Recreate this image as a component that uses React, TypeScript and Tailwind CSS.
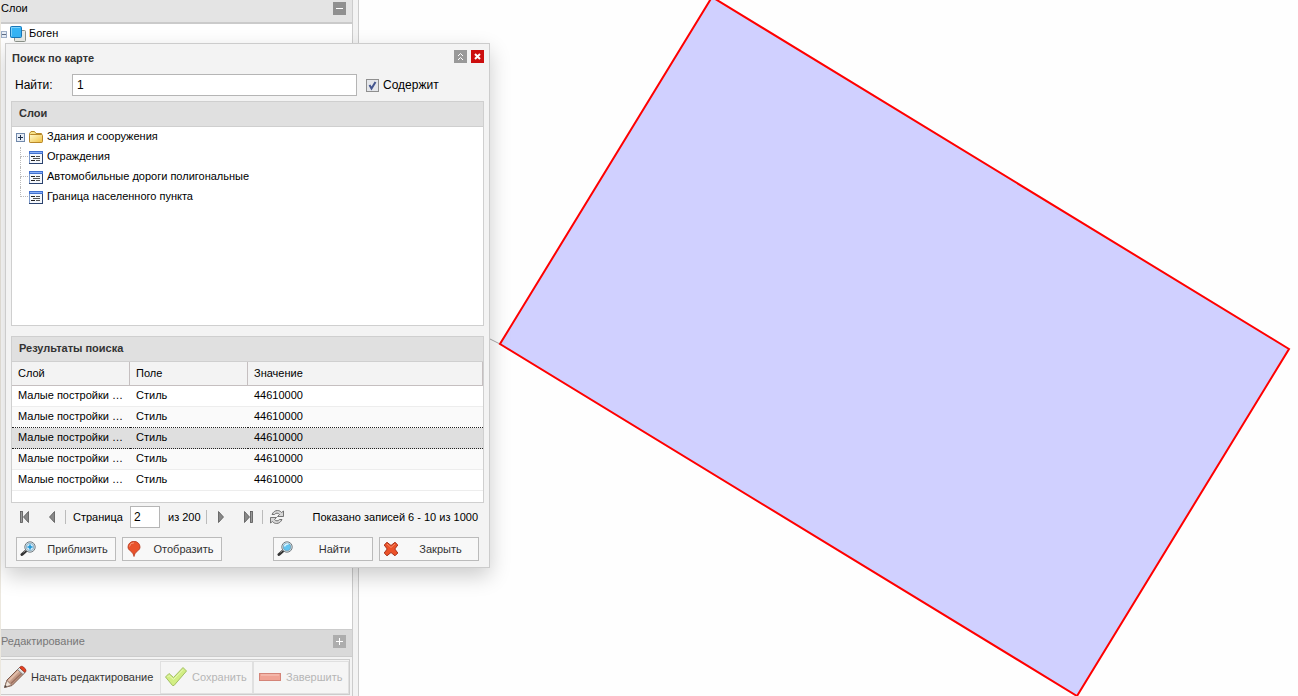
import React, {useState} from "react";
import clsx from "clsx";

interface ResultRow {
  id: number,
  layer: string,
  field: string,
  value: string,
}

interface PanelTitleProps {
  children: React.ReactNode,
}

interface DialogButtonProps {
  icon: React.ReactNode,
  label: string,
  onClick?: () => void,
}

interface ToolbarButtonProps {
  icon: React.ReactNode,
  label: string,
  disabled?: boolean,
  className?: string,
}

const layers: string[] = ["Ограждения", "Автомобильные дороги полигональные", "Граница населенного пункта"];

const results: ResultRow[] = [6, 7, 8, 9, 10].map((id) => ({
  id,
  layer: "Малые постройки …",
  field: "Стиль",
  value: "44610000",
}));

/* Icons */

function LayersIcon() {
  return (
    <svg width="16" height="16" viewBox="0 0 16 16">
      <rect x="4.500" y="4.500" width="11" height="11" rx="1" fill="#e9ebe6" stroke="#8d948c" />
      <rect x="0.500" y="0.500" width="11" height="11" rx="1" fill="#36b4f5" stroke="#1876b8" />
      <path d="M1.500 10V1.500H10" fill="none" stroke="#7fd2fb" />
    </svg>
  );
}

function FolderIcon() {
  return (
    <svg width="16" height="16" viewBox="0 0 16 16">
      <defs>
        <linearGradient id="folder" x1="0" y1="0" x2="1" y2="1">
          <stop offset="0" stopColor="#fffbd0" />
          <stop offset="1" stopColor="#f0c040" />
        </linearGradient>
      </defs>
      <path d="M1.500 13V4.500L3 2.500H6.500L8 4.500H13.500V13.500H2Z" fill="#f8e38a" stroke="#b58a2b" />
      <rect x="1.500" y="5.500" width="13" height="8" rx="1" fill="url(#folder)" stroke="#b8872a" />
    </svg>
  );
}

function LeafIcon() {
  return (
    <svg width="16" height="16" viewBox="0 0 16 16" shapeRendering="crispEdges">
      <rect x="1" y="2" width="14" height="13" fill="#7f9ccc" />
      <rect x="2" y="5" width="12" height="9" fill="#f4f7fc" />
      <rect x="1" y="2" width="14" height="3" fill="#3f6fd0" />
      <rect x="2" y="3" width="12" height="1" fill="#8ab0f5" />
      <path d="M1 14.500H15M14.500 5V15" stroke="#2b436e" fill="none" />
      <path d="M3 7.500H7M3 11.500H7" stroke="#222" fill="none" />
      <path d="M5 9.500H12M8 7.500H12M8 11.500H12" stroke="#555" fill="none" />
    </svg>
  );
}

function ExpanderIcon({expanded}: { expanded: boolean }) {
  return (
    <svg width="9" height="9" viewBox="0 0 9 9" shapeRendering="crispEdges">
      <rect x="0.500" y="0.500" width="8" height="8" fill="#e6edf7" stroke="#7189ab" />
      <path d={expanded ? "M2 4.500H7" : "M2 4.500H7M4.500 2V7"} stroke="#1c2d4a" />
    </svg>
  );
}

function MagnifierIcon({plus = false}: { plus?: boolean }) {
  return (
    <svg width="16" height="16" viewBox="0 0 16 16">
      <path d="M6.500 9.500L2 13.500" stroke="#333" strokeWidth="3" strokeLinecap="round" />
      <path d="M6 9L3.500 11.500" stroke="#888" />
      <circle cx="10" cy="6" r="5.200" fill="#f2f2f2" stroke="#6e7a80" />
      <circle cx="10" cy="6" r="3.800" fill={plus ? "#cfeafa" : "#62c4f0"} stroke="#6a98b0" strokeWidth="0.700" />
      {plus
        ? <path d="M7.500 6H12.500M10 3.500V8.500" stroke="#1793d6" strokeWidth="1.500" />
        : <path d="M7.500 5.500A3 3 0 0 1 11.500 3.300" stroke="#d9f3ff" strokeWidth="1.500" fill="none" />}
    </svg>
  );
}

function PinIcon() {
  return (
    <svg width="16" height="16" viewBox="0 0 16 16">
      <path
        d="M8 15.500C7.600 13.500 6.800 11.700 4.500 10C2.700 8.700 2 7.500 2 6A6 5.700 0 0 1 14 6C14 7.500 13.300 8.700 11.500 10C9.200 11.700 8.400 13.500 8 15.500Z"
        fill="#e9532c" stroke="#b5351a" strokeWidth="0.800"
      />
      <path d="M3.500 5.500A4.500 4 0 0 1 8 1.800" stroke="#f6987a" fill="none" />
    </svg>
  );
}

function CrossIcon() {
  return (
    <svg width="16" height="16" viewBox="0 0 16 16">
      <path
        d="M4 1.300L8 4.500L12 1.300L14.800 4L11.800 8L14.800 12L12 14.800L8 11.500L4 14.800L1.200 12L4.200 8L1.200 4Z"
        fill="#ec5229" stroke="#a8321a" strokeLinejoin="round"
      />
      <path d="M4 3L8 6.500L12 3" stroke="#f58a66" fill="none" />
    </svg>
  );
}

function RefreshIcon() {
  return (
    <svg width="16" height="16" viewBox="0 0 16 16">
      <path
        d="M3 5.500C4.200 3 6 1.500 8.500 1.500C10.200 1.500 11.500 2.200 12.500 3.500L14.500 2V7.500H8.500L10.500 5.500C9 3.700 7 3.700 5.500 5.500Z"
        fill="#d6d6d6" stroke="#666" strokeWidth="0.900" strokeLinejoin="round"
      />
      <path
        d="M13 10.500C11.800 13 10 14.500 7.500 14.500C5.800 14.500 4.500 13.800 3.500 12.500L1.500 14V8.500H7.500L5.500 10.500C7 12.300 9 12.300 10.500 10.500Z"
        fill="#d6d6d6" stroke="#666" strokeWidth="0.900" strokeLinejoin="round"
      />
    </svg>
  );
}

function ArrowIcon({back = false, bar = false}: { back?: boolean, bar?: boolean }) {
  return (
    <svg width="16" height="16" viewBox="0 0 16 16" className={clsx(back && "-scale-x-100")}>
      <path d="M4.500 2.500L9.500 8L4.500 13.500Z" fill="#888" stroke="#555" strokeWidth="0.800" />
      {bar && <rect x="10.500" y="2.500" width="2" height="11" fill="#999" stroke="#555" strokeWidth="0.800" />}
    </svg>
  );
}

function PencilIcon() {
  return (
    <svg width="24" height="24" viewBox="0 0 24 24">
      <path d="M1.500 22.500L4 15L15.500 3.500L21 8.500L9 20.500Z" fill="#c49a86" stroke="#7d5a4c" strokeLinejoin="round" />
      <path d="M5.500 16L16 5.500" stroke="#e0bba8" strokeWidth="2" />
      <path d="M8 18.500L19 8" stroke="#9b7060" strokeWidth="1.500" />
      <path d="M1.500 22.500L4 15.500L8.500 20Z" fill="#f0e2d6" stroke="#8d7468" strokeWidth="0.800" />
      <path d="M1.500 22.500L2.300 20L4 21.600Z" fill="#444" />
      <path d="M14.500 4.500L16.500 2.500L22 7.500L20 9.500Z" fill="#e3e3e3" stroke="#777" strokeWidth="0.800" />
      <path d="M16.500 2.500C18 1 19 1 20.500 2L22.300 4C23.300 5.300 23 6.300 22 7.500Z" fill="#e8401f" stroke="#8e2a1a" strokeWidth="0.800" />
    </svg>
  );
}

function CheckIcon() {
  return (
    <svg width="24" height="24" viewBox="0 0 24 24">
      <path
        d="M1.500 12L5 8.500L9.500 12.500L19 2.500L22.500 6L10 20.500H8.500Z"
        fill="#d2ee84" stroke="#a3c064" strokeLinejoin="round"
      />
      <path d="M3.500 12L5 10.500L9.500 14.500L19 4.500" stroke="#e8f8b8" fill="none" />
    </svg>
  );
}

function MinusIcon() {
  return (
    <svg width="24" height="24" viewBox="0 0 24 24">
      <rect x="1.500" y="8.500" width="21" height="7" fill="#f0a394" stroke="#d48478" />
      <path d="M3 10H21" stroke="#f7c8bc" />
    </svg>
  );
}

/* Shared parts */

function ToolButton({label, path, className}: { label: string, path: string, className?: string }) {
  return (
    <button
      type="button"
      aria-label={label}
      className={clsx("flex h-[13px] w-[13px] shrink-0 items-center justify-center text-white", className)}
    >
      <svg width="13" height="13" viewBox="0 0 13 13" fill="none" stroke="currentColor">
        <path d={path} />
      </svg>
    </button>
  );
}

function PanelTitle({children}: PanelTitleProps) {
  return (
    <h3 className="flex h-[25px] items-center border-b border-[#cfcfcf] bg-[#e0e0e0] px-[7px] pb-0.5 font-bold text-[#333]">
      {children}
    </h3>
  );
}

function DialogButton({icon, label, onClick}: DialogButtonProps) {
  return (
    <button
      type="button"
      onClick={onClick}
      className="flex h-6 w-[100px] items-center border border-[#bbb] bg-[#f8f8f8] pl-[3px] text-[#333]"
    >
      {icon}
      <span className="flex-1 pl-1 text-center">{label}</span>
    </button>
  );
}

function ToolbarButton({icon, label, disabled, className}: ToolbarButtonProps) {
  return (
    <button
      type="button"
      disabled={disabled}
      className={clsx(
        "flex h-[33px] items-center gap-1 whitespace-nowrap",
        disabled ? "border border-[#e0e0e0] bg-[#f5f5f5] text-[#b5b5b5]" : "text-[#333]",
        className
      )}
    >
      {icon}
      {label}
    </button>
  );
}

function SearchDialog() {
  const [query, setQuery] = useState<string>("1");
  const [contains, setContains] = useState<boolean>(true);
  const [page, setPage] = useState<string>("2");
  const [selectedId, setSelectedId] = useState<number>(8);

  return (
    <section
      aria-label="Поиск по карте"
      className="absolute top-[43px] left-[5px] w-[485px] border border-[#ccc] bg-[#f3f3f3] px-[5px] pb-1.5 shadow-[0_8px_20px_rgba(0,0,0,0.2)]"
    >
      <header className="flex h-7 items-center gap-1 pl-px">
        <h2 className="flex-1 font-bold text-[#333]">Поиск по карте</h2>
        <div className="flex gap-1 pb-1">
          <ToolButton label="Свернуть" path="M4 6L6.500 3.500L9 6M4 10L6.500 7.500L9 10" className="bg-[#999]" />
          <ToolButton label="Закрыть" path="M4 4L9 9M9 4L4 9" className="bg-[#cc0d0d] stroke-2" />
        </div>
      </header>

      <form className="flex h-[29px] items-center px-1 pb-[3px] text-xs" onSubmit={(e: React.FormEvent) => e.preventDefault()}>
        <label htmlFor="query" className="w-[57px]">Найти:</label>
        <input
          id="query"
          className="h-[22px] w-[285px] border border-[#b5b5b5] bg-white px-1"
          value={query}
          onChange={(e) => setQuery(e.target.value)}
        />
        <label className="ml-[9px] flex items-center gap-1">
          <span className="grid h-[13px] w-[13px]">
            <input
              type="checkbox"
              className="col-start-1 row-start-1 appearance-none border border-[#8f8f8f] bg-[#e4e6ea]"
              checked={contains}
              onChange={(e) => setContains(e.target.checked)}
            />
            {contains && (
              <svg width="13" height="13" viewBox="0 0 13 13" className="pointer-events-none col-start-1 row-start-1">
                <path d="M3.500 6L5.500 9.500L9.500 3" fill="none" stroke="#43558f" strokeWidth="2" />
              </svg>
            )}
          </span>
          Содержит
        </label>
      </form>

      <div className="h-[225px] border border-[#cfcfcf] bg-white">
        <PanelTitle>Слои</PanelTitle>
        <ul>
          <li className="flex h-5 items-center">
            <button type="button" aria-label="Развернуть" className="ml-1 pr-[3px]">
              <ExpanderIcon expanded={false} />
            </button>
            <FolderIcon />
            <span className="pb-0.5 pl-[3px]">Здания и сооружения</span>
          </li>
          {layers.map((layer, index) => (
            <li key={layer} className="flex h-5 items-center">
              <span className="ml-2 flex h-5 w-2 flex-col">
                <span className="h-2.5 border-b border-l border-dotted border-[#bbb]" />
                {index < layers.length - 1 && <span className="h-2.5 border-l border-dotted border-[#bbb]" />}
              </span>
              <LeafIcon />
              <span className="pb-0.5 pl-[3px]">{layer}</span>
            </li>
          ))}
        </ul>
      </div>

      <div className="mt-2.5 h-[167px] border border-[#cfcfcf] bg-white">
        <PanelTitle>Результаты поиска</PanelTitle>
        <table className="w-full table-fixed border-separate border-spacing-0 text-left">
          <thead>
            <tr className="h-6 bg-[#f3f3f3]">
              <th className="w-[118px] border-r border-b border-[#c5bfc0] px-1.5 pb-0.5 font-normal">Слой</th>
              <th className="w-[118px] border-r border-b border-[#c5bfc0] px-1.5 pb-0.5 font-normal">Поле</th>
              <th className="border-r border-b border-[#c5bfc0] px-1.5 pb-0.5 font-normal">Значение</th>
            </tr>
          </thead>
          <tbody>
            {results.map((row, index) => {
              const selected = row.id === selectedId;
              const cell = clsx(
                "border-b px-1.5 pb-0.5 whitespace-nowrap",
                selected || results[index + 1]?.id === selectedId ? "border-dotted border-[#222]" : "border-[#ededed]"
              );
              return (
                <tr
                  key={row.id}
                  onClick={() => setSelectedId(row.id)}
                  className={clsx("h-[21px]", selected ? "bg-[#dfdfdf]" : index % 2 ? "bg-[#fafafa]" : "bg-white")}
                >
                  <td className={cell}>{row.layer}</td>
                  <td className={cell}>{row.field}</td>
                  <td className={cell}>{row.value}</td>
                </tr>
              );
            })}
          </tbody>
        </table>
      </div>

      <nav className="flex h-7 items-center px-1.5">
        <button type="button" aria-label="Первая страница"><ArrowIcon back bar /></button>
        <button type="button" aria-label="Предыдущая страница" className="ml-2.5"><ArrowIcon back /></button>
        <span className="ml-1.5 h-3.5 border-l border-[#bbb]" />
        <label htmlFor="page" className="ml-[7px] w-[57px]">Страница</label>
        <input
          id="page"
          className="h-[22px] w-[30px] border border-[#b5b5b5] bg-white px-[3px] text-xs"
          value={page}
          onChange={(e) => setPage(e.target.value)}
        />
        <span className="ml-2 w-[38px] whitespace-nowrap">из 200</span>
        <span className="h-3.5 border-l border-[#bbb]" />
        <button type="button" aria-label="Следующая страница" className="ml-[7px]"><ArrowIcon /></button>
        <button type="button" aria-label="Последняя страница" className="ml-2.5"><ArrowIcon bar /></button>
        <span className="ml-1.5 h-3.5 border-l border-[#bbb]" />
        <button type="button" aria-label="Обновить" className="ml-1.5"><RefreshIcon /></button>
        <span className="ml-auto">Показано записей 6 - 10 из 1000</span>
      </nav>

      <footer className="mt-1.5 flex gap-1.5 px-[5px]">
        <DialogButton icon={<MagnifierIcon plus />} label="Приблизить" />
        <DialogButton icon={<PinIcon />} label="Отобразить" />
        <span className="flex-1" />
        <DialogButton icon={<MagnifierIcon />} label="Найти" />
        <DialogButton icon={<CrossIcon />} label="Закрыть" />
      </footer>
    </section>
  );
}

export default function App() {
  return (
    <div className="relative flex min-h-screen overflow-hidden bg-[#fefefe] font-['Liberation_Sans',Arial,sans-serif] text-[11px] leading-4 text-black">
      <aside className="flex w-[353px] shrink-0 flex-col border-r border-l border-r-[#ccc] border-l-[#ece8df] bg-white">
        <div className="flex h-6 justify-between border-b-2 border-[#cbcbcb] bg-[#e4e4e4] pr-1.5">
          <h2>Слои</h2>
          <ToolButton label="Свернуть слои" path="M3 6.500H10" className="mt-0.5 bg-[#909090]" />
        </div>
        <div className="flex h-5 items-center gap-[3px]">
          <button type="button" aria-label="Свернуть" className="flex w-1.5 justify-end overflow-hidden">
            <ExpanderIcon expanded />
          </button>
          <LayersIcon />
          <span className="pb-0.5">Боген</span>
        </div>
        <div className="flex-1" />
        <div className="flex h-7 justify-between border-t border-b border-[#ccc] bg-[#d9d9d9] pr-1.5">
          <h2 className="pt-[3px] text-[#777]">Редактирование</h2>
          <ToolButton label="Развернуть" path="M3 6.500H10M6.500 3V10" className="mt-[5px] bg-[#adadad]" />
        </div>
        <div className="bg-[#f3f3f3] pt-0.5 pr-0.5 pb-px">
          <div className="flex h-9 items-center border-t border-r border-b border-[#ccc]">
            <ToolbarButton icon={<PencilIcon />} label="Начать редактирование" className="flex-1 pl-0.5" />
            <ToolbarButton icon={<CheckIcon />} label="Сохранить" disabled className="w-[93px] pl-[3px]" />
            <ToolbarButton icon={<MinusIcon />} label="Завершить" disabled className="w-24 pl-1" />
          </div>
        </div>
      </aside>
      <div className="w-1.5 shrink-0 border-r border-[#ccc] bg-[#f3f3f3]" />
      <main className="relative flex-1">
        <svg
          role="img"
          aria-label="Карта"
          className="absolute inset-0 h-full w-full"
          viewBox="0 0 939 696"
          preserveAspectRatio="xMidYMid slice"
        >
          <path d="M131 339L141 344" stroke="#aaa" />
          <path d="M353 -3L930 349L718 696L141 344Z" fill="#d0d0ff" stroke="#ff0000" strokeWidth="2" />
        </svg>
      </main>
      <SearchDialog />
    </div>
  );
}
